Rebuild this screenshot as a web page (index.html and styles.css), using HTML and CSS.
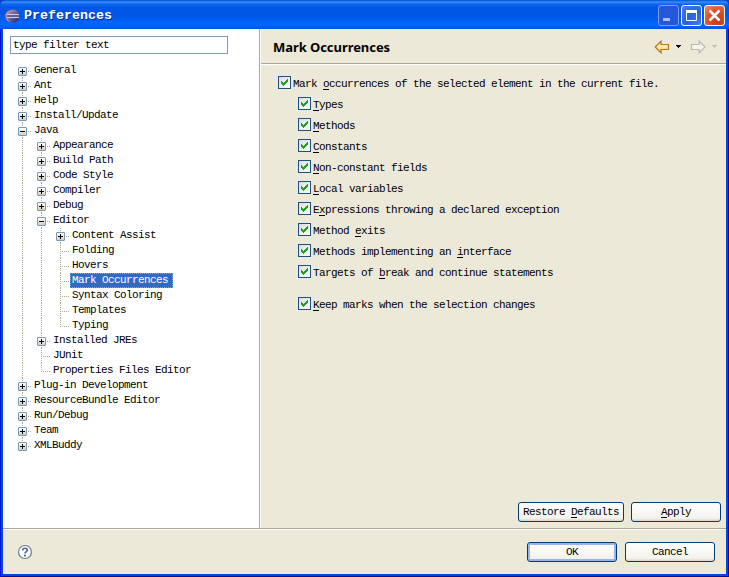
FILE: index.html
```html
<!DOCTYPE html>
<html lang="en">
<head>
<meta charset="utf-8">
<title>Preferences</title>
<link rel="stylesheet" href="styles.css">
</head>
<body>
<div class="window">
  <header class="titlebar">
    <svg class="logo" width="16" height="16" viewBox="0 0 16 16">
      <defs><linearGradient id="ball" x1="0" y1="0" x2="1" y2="1"><stop offset="0" stop-color="#d09aa6"/><stop offset=".45" stop-color="#6a649e"/><stop offset="1" stop-color="#1c1a5c"/></linearGradient></defs>
      <ellipse cx="7.2" cy="8" rx="7" ry="6.3" fill="#b98a9c"/>
      <circle cx="8.3" cy="8" r="6.4" fill="url(#ball)"/>
      <path d="M2 6.5h12M2 9.5h12" stroke="#c9d2ec"/>
      <path d="M2 8h12" stroke="#56609c" stroke-width="2"/>
    </svg>
    <h1 class="title">Preferences</h1>
    <div class="controls">
      <button class="control minimize" aria-label="Minimize"><svg width="19" height="19"><path d="M4 13.5h7" stroke="#a9bff5" stroke-width="3"/></svg></button>
      <button class="control" aria-label="Maximize"><svg width="19" height="19"><path d="M4.5 5v9.5h10V5" fill="none" stroke="#fff"/><path d="M4 5.5h11" stroke="#fff" stroke-width="3"/></svg></button>
      <button class="control close" aria-label="Close"><svg width="19" height="19"><path d="M4.5 4.5l10 10M14.5 4.5l-10 10" stroke="#fff" stroke-width="2.5"/></svg></button>
    </div>
  </header>
  <main class="body">
    <aside class="sidebar">
      <div class="filter">type filter text</div>
      <div class="tree" id="tree"></div>
    </aside>
    <section class="page">
      <div class="page-head">
        <h2>Mark Occurrences</h2>
        <div class="nav">
          <svg width="64" height="16" viewBox="0 0 64 16">
            <defs><linearGradient id="gold" x1="0" y1="0" x2="0" y2="1"><stop offset="0" stop-color="#fffbe0"/><stop offset="1" stop-color="#f6d568"/></linearGradient></defs>
            <path d="M1.2 8L7 2.3V5.5h7.5v5H7v3.2z" fill="url(#gold)" stroke="#b57a14" stroke-width="1.2"/>
            <path d="M22 6h5v1h-1v1h-1v1h-1V8h-1V7h-1z" fill="#000"/>
            <path d="M51 8L45.2 2.3V5.5h-7.7v5h7.7v3.2z" fill="#f4f3ee" stroke="#bdbab0" stroke-width="1.2"/>
            <path d="M58 6h5v1h-1v1h-1v1h-1V8h-1V7h-1z" fill="#c5c2b5"/>
          </svg>
        </div>
      </div>
      <div class="options" id="options"></div>
      <div class="page-actions">
        <button class="btn restore">Restore <u>D</u>efaults</button>
        <button class="btn"><u>A</u>pply</button>
      </div>
    </section>
  </main>
  <footer class="footer">
    <svg class="help" width="16" height="16" viewBox="0 0 16 16"><circle cx="8" cy="8" r="6.5" fill="#fff" stroke="#687c9c" stroke-width="1.2"/><path d="M5.7 6.4C5.7 3.6 10.3 3.6 10.3 6.2C10.3 7.6 8 7.7 8 9.6" fill="none" stroke="#526a96" stroke-width="1.7"/><path d="M7 10.7h2v1.7H7z" fill="#526a96"/></svg>
    <button class="btn default">OK</button>
    <button class="btn">Cancel</button>
  </footer>
</div>
<script src="app.js"></script>
</body>
</html>
```
FILE: styles.css
```css
* { box-sizing: border-box; }
body { margin: 0; background: #0a3fd0; font: 11px/15px "Liberation Mono", monospace; letter-spacing: -0.6px; color: #000; }
button { font: inherit; letter-spacing: inherit; color: inherit; padding: 0; }
u { text-decoration: underline; text-underline-offset: 2px; text-decoration-thickness: 1px; text-decoration-skip-ink: none; }
.window { width: 729px; height: 577px; display: flex; flex-direction: column; padding: 0 3px 3px; background: #0046e5; border-radius: 6px 6px 0 0; box-shadow: inset 1px 0 #0019cf, inset -1px -1px #00138c; }
.titlebar { height: 29px; flex: none; margin: 0 -3px; padding: 2px 4px 0 5px; display: flex; align-items: center; border-radius: 6px 6px 0 0; background: linear-gradient(#0050c8 0, #3a8cff 2px, #1068f0 4px, #0058e6 7px, #0055e5 15px, #0064fb 22px, #0064ff 26px, #0050dc 29px); }
.title { flex: 1; margin: 0 0 0 3px; font: bold 13.33px/20px "Liberation Mono", monospace; letter-spacing: 0; color: #fff; text-shadow: 1px 1px #0b2a8a; }
.controls { display: flex; gap: 2px; }
.control { width: 21px; height: 21px; border: 1px solid #fff; border-radius: 3px; background: radial-gradient(circle at 85% 90%, #2f7bf0, #2663e0 50%, #4a7de8 100%); }
.control svg { display: block; }
.minimize { border-color: #7f9fec; background: #2358d8; }
.close { background: radial-gradient(circle at 70% 80%, #c83a12, #e0522c 55%, #ee8a6c); }
.body { flex: 1; min-height: 0; display: flex; }
.sidebar { width: 257px; background: #fff; border-right: 1px solid #aca899; padding: 7px 7px 0; }
.filter { width: 218px; height: 18px; border: 1px solid #7f9db9; padding: 1px 2px; }
.tree { padding: 9px 0 0 3px; }
.row { display: flex; height: 15px; }
.cell { width: 19px; display: grid; align-items: center; background: repeating-linear-gradient(#aca899 0 1px, transparent 1px 2px) 9px 0 / 1px 100% no-repeat; }
.cell.first { background-size: 1px 7px; background-position: 9px 8px; }
.cell.last { background-size: 1px 8px; }
.cell.node::after { content: ""; grid-area: 1 / 1; justify-self: end; width: 10px; height: 1px; margin-top: 1px; background: repeating-linear-gradient(90deg, #aca899 0 1px, transparent 1px 2px); }
.toggle { grid-area: 1 / 1; z-index: 1; width: 9px; height: 9px; margin: 1px 0 0 5px; border: 1px solid #7898b5; border-radius: 1px; background: linear-gradient(#000, #000) 1px 3px / 5px 1px no-repeat, linear-gradient(#fff, #d2cfc2); }
.toggle.plus { background: linear-gradient(#000, #000) 1px 3px / 5px 1px no-repeat, linear-gradient(#000, #000) 3px 1px / 1px 5px no-repeat, linear-gradient(#fff, #d2cfc2); }
.label { padding: 0 5px 0 2px; white-space: nowrap; }
.label.selected { background: #316ac5; color: #fff; outline: 1px dotted #d89a3c; outline-offset: -1px; }
.page { flex: 1; display: flex; flex-direction: column; background: #ece9d8; border-left: 1px solid #fff; }
.page-head { height: 36px; flex: none; display: flex; align-items: center; justify-content: space-between; padding: 0 8px 0 12px; border-bottom: 1px solid #fff; box-shadow: inset 0 -1px #aca899; }
.page-head h2 { margin: 0; font: bold 13px/18px "Noto Sans", "Open Sans", sans-serif; letter-spacing: -0.06px; }
.nav svg { display: block; }
.options { flex: 1; padding: 7px 0 0 17px; }
.option { display: flex; align-items: center; height: 21px; gap: 2px; margin-left: 20px; white-space: pre; }
.option.top { margin-left: 0; }
.option.spaced { margin-top: 11px; }
.option span { margin-top: 4px; }
.check { width: 13px; height: 13px; flex: none; border: 1px solid #1c5180; background: linear-gradient(135deg, #dcdcd7, #fff); }
.check svg { display: block; }
.page-actions { display: flex; justify-content: flex-end; gap: 7px; padding: 0 5px 6px; }
.btn { width: 90px; height: 20px; border: 1px solid #003c74; border-radius: 3px; background: linear-gradient(#fff, #f3f2ec 85%, #d9d3c5); }
.btn.restore { width: 106px; }
.btn.default { box-shadow: inset 0 0 0 2px #9ab5ec; }
.footer { height: 46px; flex: none; display: flex; align-items: center; gap: 8px; padding: 1px 11px 0 14px; background: #ece9d8; border-top: 1px solid #aca899; box-shadow: inset 0 1px #fff; }
.help { margin-right: auto; }
```
FILE: app.js
```js
// Each node: [level, label, toggle]
const nodes = [
  [0, "General", "+"], [0, "Ant", "+"], [0, "Help", "+"], [0, "Install/Update", "+"], [0, "Java", "-"],
  [1, "Appearance", "+"], [1, "Build Path", "+"], [1, "Code Style", "+"], [1, "Compiler", "+"], [1, "Debug", "+"], [1, "Editor", "-"],
  [2, "Content Assist", "+"], [2, "Folding"], [2, "Hovers"], [2, "Mark Occurrences"], [2, "Syntax Coloring"], [2, "Templates"], [2, "Typing"],
  [1, "Installed JREs", "+"], [1, "JUnit"], [1, "Properties Files Editor"],
  [0, "Plug-in Development", "+"], [0, "ResourceBundle Editor", "+"], [0, "Run/Debug", "+"], [0, "Team", "+"], [0, "XMLBuddy", "+"]
];
const isLast = (i) => {
  const next = nodes.slice(i + 1).find((n) => n[0] <= nodes[i][0]);
  return !next || next[0] < nodes[i][0];
};
document.getElementById("tree").innerHTML = nodes.map(([level, label, toggle], i) => {
  const edge = i === 0 ? " first" : isLast(i) ? " last" : "";
  const box = toggle ? `<i class="toggle${toggle === "+" ? " plus" : ""}"></i>` : "";
  const selected = label === "Mark Occurrences" ? " selected" : "";
  return `<div class="row">${'<span class="cell"></span>'.repeat(level)}<span class="cell node${edge}">${box}</span><span class="label${selected}">${label}</span></div>`;
}).join("");

const options = [
  ["Mark <u>o</u>ccurrences of the selected element in the current file.", "top"],
  ["<u>T</u>ypes"], ["<u>M</u>ethods"], ["<u>C</u>onstants"], ["<u>N</u>on-constant fields"], ["<u>L</u>ocal variables"],
  ["E<u>x</u>pressions throwing a declared exception"], ["Method <u>e</u>xits"], ["Methods implementing an <u>i</u>nterface"],
  ["Targets of <u>b</u>reak and continue statements"], ["<u>K</u>eep marks when the selection changes", "spaced"]
];
// Stepped tick: seven one-pixel columns, three pixels tall
const tick = '<i class="check"><svg width="11" height="11" shape-rendering="crispEdges"><path d="M2 4h1v1h1v1h1v-1h1v-1h1v-1h1v-1h1v3h-1v1h-1v1h-1v1h-1v1h-1v-1h-1v-1h-1z" fill="#21a121"/></svg></i>';
document.getElementById("options").innerHTML = options.map(([text, kind = ""]) =>
  `<label class="option ${kind}">${tick}<span>${text}</span></label>`).join("");
```
